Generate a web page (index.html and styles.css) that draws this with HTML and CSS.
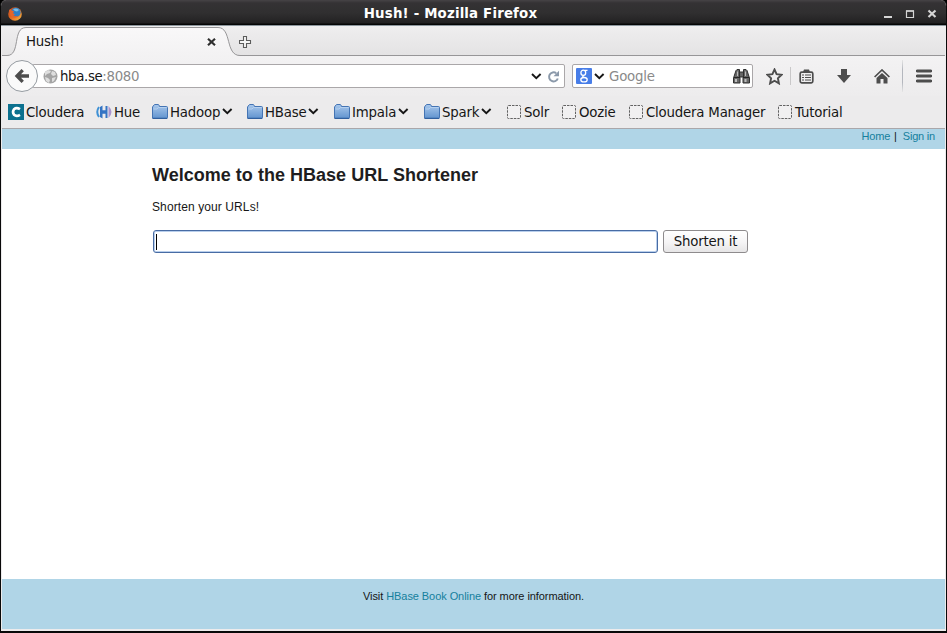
FILE: index.html
```html
<!DOCTYPE html>
<html lang="en">
<head>
<meta charset="utf-8">
<title>Hush!</title>
<link rel="stylesheet" href="styles.css">
</head>
<body>
<svg width="0" height="0" class="defs" aria-hidden="true">
  <defs>
    <linearGradient id="fold" x1="0" y1="0" x2="0" y2="1"><stop offset="0" stop-color="#a9c8ec"/><stop offset="1" stop-color="#6294cf"/></linearGradient>
    <linearGradient id="fox" x1="0" y1="0" x2="1" y2="1"><stop offset="0" stop-color="#b74720"/><stop offset=".5" stop-color="#e56a20"/><stop offset="1" stop-color="#f5bd45"/></linearGradient>
    <linearGradient id="tabfill" x1="0" y1="0" x2="0" y2="1"><stop offset="0" stop-color="#f9f8f9"/><stop offset="1" stop-color="#f3f2f3"/></linearGradient>
    <symbol id="folder" viewBox="0 0 16 16"><path d="M.5 14V3L2 1Q2.300.5 3 .5h3q.7 0 1 .6L7.500 2.500H14.500q1 0 1 1v10q0 .6-.6.6H1.100Q.5 14.600.5 14z" fill="url(#fold)" stroke="#4474b4"/><path d="M1.500 5h3.500l1.500-1.500h8" fill="none" stroke="#b5d0ef"/><path d="M.7 14.500h14.600" stroke="#31609f"/></symbol>
    <symbol id="blank" viewBox="0 0 15 15"><rect x=".5" y=".5" width="13" height="13" rx="1" fill="#f1f0f1" stroke="#636363" stroke-dasharray="2.500 1"/></symbol>
    <symbol id="chev" viewBox="0 0 11 7"><path d="M1 1l4.300 4.200L9.600 1" fill="none" stroke="#161616" stroke-width="1.900"/></symbol>
  </defs>
</svg>
<div class="window">
  <header class="titlebar">
    <svg class="firefox" width="14" height="14" viewBox="0 0 14 14"><circle cx="7" cy="7" r="6.800" fill="url(#fox)"/><circle cx="7.900" cy="5.400" r="4.700" fill="#2f7fc4"/><path d="M5 2.500Q8 .5 11 3L9 4.500 7 4z" fill="#78bce6"/><path d="M1 3.500L2.500 2l1 1.500L6 4 5 6.200 7 7.200 5.500 8.500Q8 10 10.500 8.500 9 11 6 10.800 2 10 1 3.500z" fill="#e5652a"/></svg>
    <h1>Hush! - Mozilla Firefox</h1>
    <svg class="controls" width="56" height="12" viewBox="0 0 56 12"><g fill="none" stroke="#d5d5d5"><path d="M0 9h8" stroke-width="2"/><path d="M22.500 3h7v6.500h-7z" stroke-width="1.200"/><path d="M22 3h8" stroke-width="1.600"/><path d="M44.500 2.500l7 6.500M51.500 2.500l-7 6.500" stroke-width="2.200"/></g></svg>
  </header>
  <div class="tabstrip">
    <div class="tab">
      <svg class="tabshape" width="240" height="30" viewBox="0 0 240 30"><path d="M0 30V29.500h5C20 29.500 9 1.500 24 1.500H216C231 1.500 222 29.500 238 29.500h2V30z" fill="url(#tabfill)"/><path d="M0 29.500h5C19 29.500 10 1.500 24 1.500H216C230 1.500 223 29.500 238 29.500h2" fill="none" stroke="#979698"/></svg>
      <span>Hush!</span>
      <svg class="close" width="9" height="8" viewBox="0 0 9 8"><path d="M1 .8l7 6.400M8 .8L1 7.200" stroke="#303030" stroke-width="2.200"/></svg>
    </div>
    <svg class="plus" width="13" height="13" viewBox="0 0 13 13"><path d="M4.500.5h3v4h4v3h-4v4h-3v-4h-4v-3h4z" fill="#f6f6f6" stroke="#5c5c5c" stroke-width="1.100"/></svg>
  </div>
  <nav class="navbar">
    <div class="back"><svg width="16" height="16" viewBox="0 0 16 16"><path d="M15 8H3M8.700 2.200L3 8l5.700 5.800" fill="none" stroke="#4d4d4d" stroke-width="3.300"/></svg></div>
    <div class="urlbar">
      <svg width="15" height="15" viewBox="0 0 15 15"><circle cx="7.500" cy="7.500" r="7" fill="#a4a4a4"/><path d="M2 3l3-2 3 1-1 2-3 1-2 2zM9 2l3 1 1 3-3 1-2-2zM2 8l3 1 2 2-1 3-3-2zM9 9l4-1-2 4-2 1z" fill="#dedede"/></svg>
      <span class="host">hba.se<span>:8080</span></span>
      <svg class="drop" width="11" height="7"><use href="#chev"/></svg>
      <svg width="13" height="13" viewBox="0 0 13 13"><path d="M9.200 3.200A4.500 4.500 0 1 0 10.800 8.500" fill="none" stroke="#8b99aa" stroke-width="2"/><path d="M12 .8v5.500H6.500z" fill="#8b99aa"/></svg>
    </div>
    <div class="search">
      <svg width="16" height="16" viewBox="0 0 16 16"><rect width="16" height="16" rx="1" fill="#477de8"/><g fill="none" stroke="#fff" stroke-width="1.300"><ellipse cx="7.300" cy="4.700" rx="2.400" ry="2.600"/><path d="M9 2.300h2.500M8 7.300Q5.500 8.500 8 9.500"/><ellipse cx="8" cy="11.700" rx="3.200" ry="2.200"/></g></svg>
      <svg class="drop" width="11" height="7"><use href="#chev"/></svg>
      <span>Google</span>
      <svg class="bino" width="17" height="15" viewBox="0 0 17 15"><g fill="#666" stroke="#303030"><path d="M3 1.500L4 .5h2.500v6.500l.5 2v5H.5V9zM14 1.500L13 .5h-2.500V7l-.5 2v5h6.500V9z"/><path d="M6.500 3h4v5h-4z"/></g><path d="M2 10h2v3H2zM11.500 10h2v3h-2zM4 2.500h1V7H4zM12 2.500h1V7h-1z" fill="#bcbcbc"/><path d="M1 8.500h6M10 8.500h6" stroke="#252525"/></svg>
    </div>
    <svg class="star" width="17" height="17" viewBox="0 0 17 17"><path d="M8.500 1.500l2.100 4.700 5 .6-3.700 3.500 1 5.100-4.400-2.600-4.400 2.600 1-5.100L1.400 6.800l5-.6z" fill="none" stroke="#4d4d4d" stroke-width="1.900"/></svg>
    <i class="sep small"></i>
    <svg class="list" width="15" height="15" viewBox="0 0 15 15"><path d="M4 3L5 .5h5L11 3z" fill="#4d4d4d"/><rect x="1.200" y="3.200" width="12.600" height="10.600" rx="1.500" fill="none" stroke="#4d4d4d" stroke-width="1.700"/><path d="M3 6h2M6 6h6M3 8.500h2M6 8.500h6M3 11h2M6 11h6" stroke="#4d4d4d" stroke-width="1.200"/></svg>
    <svg class="down" width="14" height="14" viewBox="0 0 14 14"><path d="M4 0h6v6h4L7 14 0 6h4z" fill="#4d4d4d"/></svg>
    <svg class="home" width="16" height="15" viewBox="0 0 16 15"><path d="M.6 8L8 1l7.400 7" fill="none" stroke="#4d4d4d" stroke-width="1.700"/><path d="M8 4l5.500 5v5.500h-4V10h-3v4.500h-4V9z" fill="#4d4d4d"/></svg>
    <i class="sep tall"></i>
    <svg class="menu" width="16" height="14" viewBox="0 0 16 14"><path d="M1.300 2h13.400M1.300 7h13.400M1.300 12h13.400" stroke="#4d4d4d" stroke-width="2.900" stroke-linecap="round"/></svg>
  </nav>
  <div class="bookmarks">
    <a><svg width="16" height="16" viewBox="0 0 16 16"><rect width="16" height="16" fill="#0c718f"/><path d="M12 5.200Q8.500 3 6 5.200 4 8 6 10.800 8.500 13 12 10.800" fill="none" stroke="#fff" stroke-width="2.600"/></svg><span>Cloudera</span></a>
    <a><svg width="16" height="14" viewBox="0 0 16 14"><path d="M3 2Q-.5 7 3 12" fill="none" stroke="#3f91d5" stroke-width="2"/><path d="M4 2l2.500-1.500v4.800h3V1h2v12h-2V8.700h-3v4.800L4 12z" fill="#3474c4"/><path d="M12.500 1q6 6 0 12z" fill="#a995d0"/></svg><span>Hue</span></a>
    <a><svg width="16" height="16"><use href="#folder"/></svg><span>Hadoop</span><svg class="chev" width="11" height="7"><use href="#chev"/></svg></a>
    <a><svg width="16" height="16"><use href="#folder"/></svg><span>HBase</span><svg class="chev" width="11" height="7"><use href="#chev"/></svg></a>
    <a><svg width="16" height="16"><use href="#folder"/></svg><span>Impala</span><svg class="chev" width="11" height="7"><use href="#chev"/></svg></a>
    <a><svg width="16" height="16"><use href="#folder"/></svg><span>Spark</span><svg class="chev" width="11" height="7"><use href="#chev"/></svg></a>
    <a><svg class="blank" width="15" height="15"><use href="#blank"/></svg><span>Solr</span></a>
    <a><svg class="blank" width="15" height="15"><use href="#blank"/></svg><span>Oozie</span></a>
    <a><svg class="blank" width="15" height="15"><use href="#blank"/></svg><span>Cloudera Manager</span></a>
    <a><svg class="blank" width="15" height="15"><use href="#blank"/></svg><span>Tutorial</span></a>
  </div>
  <div class="userbar"><a>Home</a><span>|</span><a>Sign in</a></div>
  <main>
    <h2>Welcome to the HBase URL Shortener</h2>
    <p>Shorten your URLs!</p>
    <form>
      <div class="field"><i class="caret"></i></div>
      <button type="button">Shorten it</button>
    </form>
  </main>
  <footer>Visit <a>HBase Book Online</a> for more information.</footer>
</div>
</body>
</html>
```
FILE: styles.css
```css
* { box-sizing: border-box; }
body { margin: 0; background: #000; font: 13.33px "DejaVu Sans", sans-serif; color: #161616; overflow: hidden; }
svg { display: block; flex: none; }
.defs { position: absolute; }
.window { width: 947px; height: 633px; display: flex; flex-direction: column; border: solid #090909; border-width: 0 1px 2px; border-radius: 6px 6px 0 0; padding: 0 1px 2px; background: #ecebec; overflow: hidden; }
.titlebar { height: 26px; margin: 0 -1px; display: flex; align-items: center; flex: none; background: linear-gradient(#464346 0, #343234 3px, #302f30 13px, #222122 23px, #050505 24px); border-bottom: 1px solid #8c969d; padding: 1px 8px 0 7px; }
.titlebar h1 { flex: 1; margin: 0; padding: 2px 5px 0 0; text-align: center; font-size: 13.33px; line-height: 22px; color: #fff; letter-spacing: .18px; }
.controls { margin-right: -2px; }
.controls, .firefox { margin-top: 2px; }
.tabstrip { height: 30px; flex: none; display: flex; background: linear-gradient(#efeeef, #e4e3e4); border-bottom: 1px solid #979698; }
.tab { position: relative; width: 237px; height: 30px; display: flex; align-items: center; padding: 0 22px 0 24px; letter-spacing: -.2px; }
.tab span { position: relative; flex: 1; }
.tabshape { position: absolute; left: 0; top: 0; }
.close { position: relative; margin-top: 2px; margin-right: 1px; }
.plus { margin-top: 10px; }
.navbar { height: 40px; flex: none; display: flex; align-items: center; padding-left: 4px; background: linear-gradient(#f3f2f3, #edeced); }
.back { position: relative; width: 32px; height: 32px; flex: none; border: 1px solid #969ca2; border-radius: 50%; background: #fafafa; display: flex; align-items: center; justify-content: center; }
.urlbar { width: 533px; height: 24px; flex: none; margin-left: -6px; border: 1px solid #aaa7a9; border-radius: 2px; background: #fff; display: flex; align-items: center; padding: 0 4px 0 10px; letter-spacing: -.35px; }
.host { flex: 1; padding-left: 2px; }
.host span, .search span { color: #8a8a8a; }
.urlbar .drop { margin-right: 5px; }
.search { width: 181px; height: 24px; flex: none; margin-left: 7px; border: 1px solid #aaa7a9; border-radius: 2px; background: #fff; display: flex; align-items: center; padding: 0 2px 0 3px; letter-spacing: -.2px; }
.search .drop { margin-left: 2px; }
.search span { flex: 1; padding-left: 4px; }
.star { margin-left: 13px; }
.sep { width: 1px; background: #c9c8c9; flex: none; }
.small { height: 18px; margin-left: 7px; }
.tall { height: 32px; margin-left: 12px; background: linear-gradient(#e5e5e5, #b4b7be 30%, #b4b7be 70%, #e5e5e5); }
.list { margin-left: 8px; }
.down { margin-left: 23px; }
.home { margin-left: 23px; }
.menu { margin-left: 13px; }
.bookmarks { height: 33px; flex: none; display: grid; grid-template-columns: 88px 56px 95px 87px 90px 83px 55px 67px 149px 1fr; align-items: center; padding: 0 0 1px 6px; background: #ecebec; border-bottom: 1px solid #aaa7aa; }
.bookmarks a { display: flex; align-items: center; gap: 2px; white-space: nowrap; letter-spacing: -.2px; }
.bookmarks span { padding-top: 2px; }
.bookmarks .chev { margin: 0 15px 0 auto; }
.bookmarks .blank { margin-top: 2px; }
.userbar { height: 20px; flex: none; background: #b0d5e7; font: 11px/14px "Liberation Sans", sans-serif; letter-spacing: -.2px; display: flex; justify-content: flex-end; padding-right: 10px; }
.userbar span { margin: 0 6px 0 4px; }
.userbar a, footer a { color: #15809d; }
main { flex: 1; background: #fff; padding: 15px 0 0 150px; font-family: "Liberation Sans", sans-serif; }
h2 { margin: 0; font-size: 18px; line-height: 22px; color: #1e1d20; letter-spacing: .02px; }
p { margin: 13px 0 0; font-size: 12px; line-height: 16px; letter-spacing: .1px; }
form { display: flex; margin: 14px 0 0 1px; gap: 5px; }
.field { width: 505px; height: 23px; border: 1px solid #486ca4; border-radius: 3px; box-shadow: inset 0 0 0 1px #b9cfec; background: #fff; padding: 3px 0 0 2px; margin-top: 1px; }
.caret { display: block; width: 1px; height: 16px; background: #000; }
button { width: 85px; height: 23px; border: 1px solid #8e8b8d; border-radius: 3px; background: linear-gradient(#fff, #f5f4f5 55%, #e6e5e6); padding: 0; margin: 1px 0 0; font: 13.33px "DejaVu Sans", sans-serif; line-height: 20px; color: #161616; letter-spacing: -.2px; }
footer { height: 50px; flex: none; background: #b0d5e7; text-align: center; padding-top: 10px; font: 11px/14px "Liberation Sans", sans-serif; letter-spacing: -.07px; }
```
